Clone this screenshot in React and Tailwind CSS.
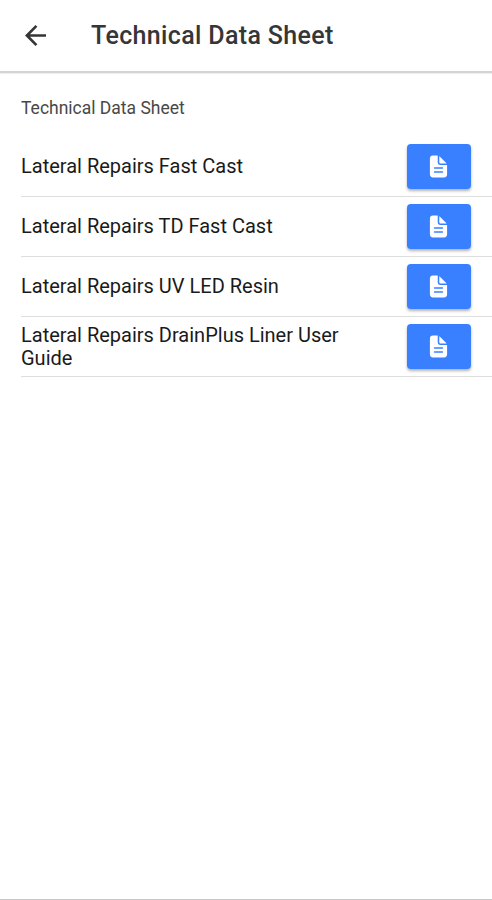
import React from "react";

const rows = [
  "Lateral Repairs Fast Cast",
  "Lateral Repairs TD Fast Cast",
  "Lateral Repairs UV LED Resin",
  "Lateral Repairs DrainPlus Liner User Guide",
];

function DocumentIcon() {
  return (
    <svg viewBox="0 0 512 512" className="block h-[25px] w-[25px]" fill="currentColor">
      <path d="M428 224H288a48 48 0 0 1-48-48V36a4 4 0 0 0-4-4h-92a64 64 0 0 0-64 64v320a64 64 0 0 0 64 64h224a64 64 0 0 0 64-64V228a4 4 0 0 0-4-4zm-92 160H176a16 16 0 0 1 0-32h160a16 16 0 0 1 0 32zm0-80H176a16 16 0 0 1 0-32h160a16 16 0 0 1 0 32z" />
      <path d="M419.2 188.600 275.400 44.800a2 2 0 0 0-3.400 1.400V176a16 16 0 0 0 16 16h129.800a2 2 0 0 0 1.400-3.400z" />
    </svg>
  );
}

export default function App() {
  return (
    <div className="flex h-[900px] w-[492px] flex-col overflow-hidden border-b border-[#c8c8c8] bg-white font-[Roboto,sans-serif]">
      <header className="flex h-[73px] shrink-0 items-center border-b-2 border-[#d3d3d3] pl-[23px] text-[#363636] shadow-[0_1px_1px_rgba(0,0,0,0.06)]">
        <svg viewBox="4 4 16 16" className="h-[21px] w-[25px]" fill="currentColor">
          <path d="M20 11H7.830l5.590-5.590L12 4l-8 8 8 8 1.410-1.410L7.830 13H20v-2z" />
        </svg>
        <h1 className="ml-[43px] text-[25px] leading-[37px] font-medium tracking-[0.350px]">Technical Data Sheet</h1>
      </header>
      <main className="pl-[21px]">
        <p className="flex h-[64px] items-center pt-[6px] text-[17.5px] text-[#484848]">Technical Data Sheet</p>
        <ul>
          {rows.map((title) => (
            <li key={title} className="flex h-[60px] items-center justify-between border-b border-[#dedede] pr-[21px]">
              <span className="w-[340px] text-[20px] leading-[23px] text-[#1a1a1a]">{title}</span>
              <button className="flex h-[45px] w-[64px] items-center justify-center rounded-[4px] bg-[#3880ff] pr-px text-white shadow-[0_2px_3px_rgba(0,0,0,0.3)]">
                <DocumentIcon />
              </button>
            </li>
          ))}
        </ul>
      </main>
    </div>
  );
}
